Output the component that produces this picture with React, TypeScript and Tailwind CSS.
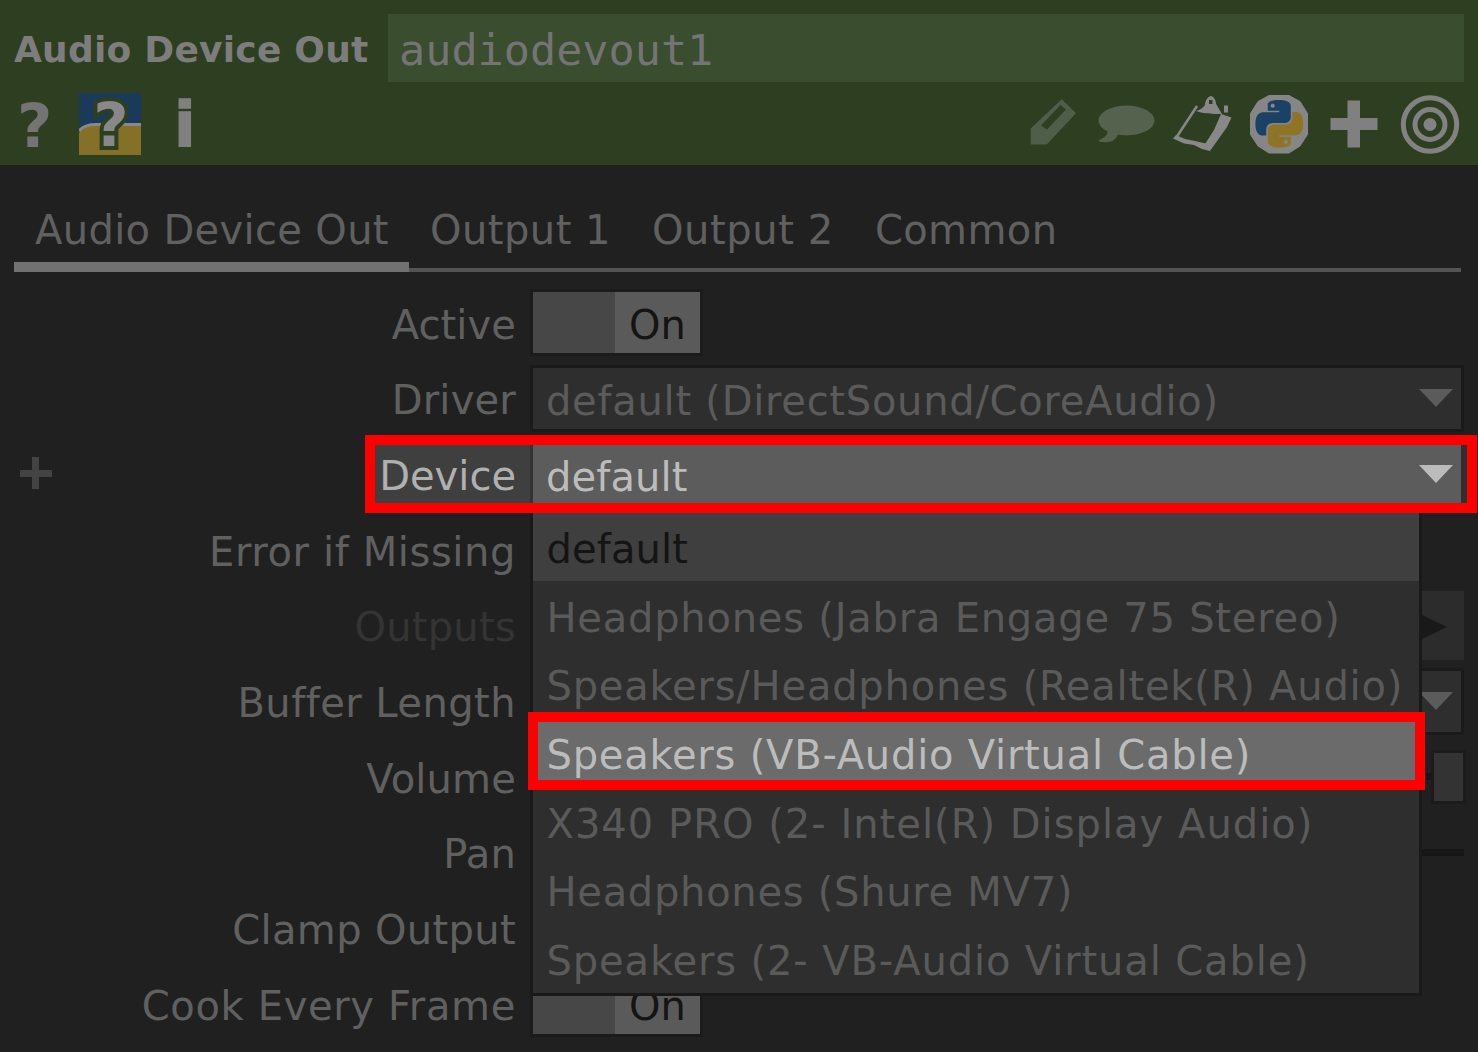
import type { ReactNode } from "react";

const PYTHON_HALF =
  "M14.25.18l.9.2.73.26.59.3.45.32.34.34.25.34.16.33.1.3.04.26.02.2-.01.13V8.5l-.05.63-.13.55-.21.46-.26.38-.3.31-.33.25-.35.19-.35.14-.33.1-.3.07-.26.04-.21.02H8.77l-.69.05-.59.14-.5.22-.41.27-.33.32-.27.35-.2.36-.15.37-.1.35-.07.32-.04.27-.02.21v3.06H3.17l-.21-.03-.28-.07-.32-.12-.35-.18-.36-.26-.36-.36-.35-.46-.32-.59-.28-.73-.21-.88-.14-1.05-.05-1.23.06-1.22.16-1.04.24-.87.32-.71.36-.57.4-.44.42-.33.42-.24.4-.16.36-.1.32-.05.24-.01h.16l.06.01h8.16v-.83H6.18l-.01-2.75-.02-.37.05-.34.11-.31.17-.28.25-.26.31-.23.38-.2.44-.18.51-.15.58-.12.64-.1.71-.06.77-.04.84-.02 1.27.05zm-6.3 1.98l-.23.33-.08.41.08.41.23.34.33.22.41.09.41-.09.33-.22.23-.34.08-.41-.08-.41-.23-.33-.33-.22-.41-.09-.41.09z";

function HeaderIcons() {
  return (
    <div className="flex items-center pt-[2px]">
      <svg className="mr-[21px] h-[60px] w-[47px]" viewBox="0 0 47 60" fill="#4f5e48">
        <path
          fillRule="evenodd"
          d="M.7 34.500 31.700 5.300 46 19.300 16.700 50.600H.7ZM11 31.500l6 4 19-20-5.500-4.500Z"
        />
      </svg>
      <svg className="mr-[17px] h-[60px] w-[58px]" viewBox="0 0 58 60" fill="#55634e">
        <ellipse cx="28.500" cy="26.500" rx="28" ry="15" />
        <path d="M9 35c2 6-2 8-9 12C8 50 18 48 20 40Z" />
      </svg>
      <svg className="mr-[17px] h-[60px] w-[59px]" viewBox="0 0 59 60" fill="#888888">
        <path d="M24 12 3 44" fill="none" stroke="#888888" strokeWidth="2.500" />
        <path d="M0 44.500 3 41l9 4 10 2 13 3 2 7-8-2-8-4-10-1.500Z" />
        <path d="M48 20 58.500 23.500 54 33l-17 24-5-7 9-14Z" />
        <path fillRule="evenodd" d="M23 17c4-1 7-3 9-6 0-4 2-8 6-9 3 1 5 4 5 8 2 3 3 5 6 10-9 0-18 0-26-3ZM36 6v4h3.500V6Z" />
        <path d="M51 11.500h4v7h-4z" />
      </svg>
      <svg className="mr-[21px] h-[60px] w-[60px]" viewBox="0 0 60 60">
        <path d="M20 1.500h20l11 6 7.500 12v21L51 52l-11 7H20L9 52 1.500 40.500v-21L9 7.500Z" fill="#868686" stroke="#868686" strokeWidth="1" strokeLinejoin="round" />
        <g transform="translate(6.500 6) scale(1.980)" fillRule="evenodd">
          <path d={PYTHON_HALF} fill="#1b4266" />
          <path d={PYTHON_HALF} fill="#8e7427" transform="rotate(180 12 12)" />
        </g>
      </svg>
      <svg className="mr-[22px] h-[60px] w-[48px]" viewBox="0 0 48 60" fill="#808080">
        <path d="M17.500 6.500h12.500V24H47.500v12H30v17.500H17.500V36H.5V24h17Z" />
      </svg>
      <svg className="h-[60px] w-[60px]" viewBox="0 0 60 60" fill="none" stroke="#828282">
        <circle cx="30" cy="30.500" r="26.700" strokeWidth="5" />
        <circle cx="30" cy="30.500" r="15" strokeWidth="5" />
        <circle cx="30" cy="30.500" r="6.500" fill="#828282" stroke="none" />
      </svg>
    </div>
  );
}

function Header() {
  return (
    <header className="flex h-[165px] flex-col bg-[#2d3f20] pt-[14px]">
      <div className="flex h-[68px] items-center pr-[14px]">
        <h1 className="w-[388px] pl-[14px] pt-[4px] text-[36px] leading-none font-bold tracking-[0.234px] text-[#7d7d7d]">
          Audio Device Out
        </h1>
        <div className="flex h-full flex-1 items-center bg-[#3a4d2e] pt-[5px] pl-[11px] font-['DejaVu_Sans_Mono',monospace] text-[43.500px] leading-none text-[#747474]">
          audiodevout1
        </div>
      </div>
      <div className="flex h-[84px] items-center justify-between pr-[18px]">
        <div className="flex items-center pt-[2px] text-[61px] leading-none font-bold">
          <span className="w-[79px] pt-[2px] pl-[17px] text-[#747474]">?</span>
          <span className="relative flex h-[62px] w-[62px] items-center justify-center">
            <svg className="absolute inset-0 size-full" viewBox="0 0 62 62">
              <path d="M0 0h62v33H0Z" fill="#1a3a5c" />
              <path d="M0 40C4 34 9 31 17 31h45v31H0Z" fill="#857028" />
              <path d="M0 38C4 33 9 31.500 17 31.500h45" fill="none" stroke="#888888" strokeWidth="3" />
            </svg>
            <span className="relative pt-[1px] pl-[2px] text-[#888888] [-webkit-text-stroke:8px_#2d3f20] [paint-order:stroke_fill]">
              ?
            </span>
          </span>
          <span className="pl-[33px] text-[63px] text-[#808080] [-webkit-text-stroke:1.500px_#808080]">i</span>
        </div>
        <HeaderIcons />
      </div>
    </header>
  );
}

function Tabs() {
  return (
    <nav className="ml-[14px] flex h-[107px] w-[1447px] flex-col justify-end text-[#606060]">
      <div className="flex gap-[41px] pb-[12px] pl-[21px] leading-[40px]">
        <span className="tracking-[0.340px]">Audio Device Out</span>
        <span className="tracking-[0.500px]">Output 1</span>
        <span className="tracking-[0.600px]">Output 2</span>
        <span className="tracking-[0.400px]">Common</span>
      </div>
      <div className="flex items-end">
        <div className="h-[10px] w-[395px] bg-[#717171]" />
        <div className="h-[4px] flex-1 bg-[#545454]" />
      </div>
    </nav>
  );
}

function Row({ label, tracking, color = "text-[#606060]", children }: { label: string; tracking: string; color?: string; children?: ReactNode }) {
  return (
    <div className="flex h-[75.670px] items-center">
      <div className={`w-[530px] shrink-0 pr-[14px] text-right leading-none ${tracking} ${color}`}>{label}</div>
      <div className="-mt-[4px] flex flex-1 items-center">{children}</div>
    </div>
  );
}

function Toggle() {
  return (
    <div className="flex h-[67px] w-[173px] border-[3px] border-[#1b1b1b]">
      <div className="w-[82px] bg-[#474747]" />
      <div className="flex flex-1 items-center bg-[#5a5a5a] pt-[4px] pl-[14px] leading-none text-[#141414]">On</div>
    </div>
  );
}

function Caret({ color }: { color: string }) {
  return (
    <svg className={`h-[18px] w-[34px] ${color}`} viewBox="0 0 34 18" fill="currentColor">
      <path d="M0 0h34L17 18Z" />
    </svg>
  );
}

function Select({ value, tracking = "" }: { value?: string; tracking?: string }) {
  return (
    <div className="flex h-[67px] w-[934px] items-center justify-between border-[3px] border-[#1a1a1a] bg-[#2e2e2e] pr-[8px] pl-[13px] leading-none text-[#5b5b5b]">
      <span className={`pt-[5px] ${tracking}`}>{value}</span>
      <Caret color="text-[#5b5b5b]" />
    </div>
  );
}

const options = [
  { text: "default", style: "bg-[#3f3f3f] text-[#141414] tracking-[0.100px]" },
  { text: "Headphones (Jabra Engage 75 Stereo)", style: "text-[#5a5a5a] tracking-[0.770px]" },
  { text: "Speakers/Headphones (Realtek(R) Audio)", style: "text-[#5a5a5a] tracking-[0.790px]" },
  { text: "Speakers (VB-Audio Virtual Cable)", style: "bg-[#6b6b6b] text-[#bcbcbc] tracking-[0.770px]" },
  { text: "X340 PRO (2- Intel(R) Display Audio)", style: "text-[#5a5a5a] tracking-[1.010px]" },
  { text: "Headphones (Shure MV7)", style: "text-[#5a5a5a] tracking-[0.720px]" },
  { text: "Speakers (2- VB-Audio Virtual Cable)", style: "text-[#5a5a5a] tracking-[0.870px]" },
];

function DeviceMenu() {
  return (
    <div className="absolute top-[512px] left-[530px] w-[892px] border-x-[3px] border-b-[3px] border-[#191919] bg-[#2e2e2e]">
      {options.map((o) => (
        <div key={o.text} className={`flex h-[68.700px] items-center pt-[5px] pl-[13.500px] leading-none whitespace-nowrap ${o.style}`}>
          {o.text}
        </div>
      ))}
    </div>
  );
}

export default function App() {
  return (
    <div className="relative h-[1052px] w-[1478px] overflow-hidden bg-[#202020] font-['DejaVu_Sans',Verdana,sans-serif] text-[40px]">
      <Header />
      <Tabs />
      <main className="mt-[15px]">
        <Row label="Active" tracking="tracking-[0.100px]">
          <Toggle />
        </Row>
        <Row label="Driver" tracking="tracking-[0.200px]">
          <Select value="default (DirectSound/CoreAudio)" tracking="tracking-[0.730px]" />
        </Row>
        <div className="relative flex h-[75.670px] items-center">
          <svg className="absolute top-[19px] left-[20px] h-[32px] w-[32px]" viewBox="0 0 32 32" fill="#434343">
            <path d="M12 0h7v32h-7zM0 13h32v7H0z" />
          </svg>
          <div className="ml-[370px] flex h-[62px] w-[160px] items-center justify-end bg-[#3f3f3f] pr-[14px] leading-none text-[#b0b0b0]">
            Device
          </div>
          <div className="flex h-[62px] w-[931px] items-center justify-between border-l-[3px] border-[#333333] bg-[#5c5c5c] pr-[8px] pl-[13px] leading-none text-[#bcbcbc]">
            <span className="pt-[1px] tracking-[0.100px]">default</span>
            <span className="-mt-[5px] flex">
              <Caret color="text-[#bcbcbc]" />
            </span>
          </div>
          <div className="h-[62px] w-[6px] bg-[#2f2f2f]" />
        </div>
        <Row label="Error if Missing" tracking="tracking-[0.600px]" />
        <Row label="Outputs" tracking="tracking-[0.250px]" color="text-[#343434]">
          <div className="ml-[892px] flex h-[69px] w-[42px] items-center bg-[#2c2c2c] pt-[3px]">
            <svg className="h-[24px] w-[26px]" viewBox="0 0 26 24" fill="#191919">
              <path d="M0 0v24L25 12Z" />
            </svg>
          </div>
        </Row>
        <Row label="Buffer Length" tracking="tracking-[0.450px]">
          <Select />
        </Row>
        <Row label="Volume" tracking="tracking-[0.168px]">
          <div className="h-[7px] w-[901px] bg-[#171717]" />
          <div className="h-[54px] w-[35px] border-[3px] border-[#1b1b1b] bg-[#333333]" />
        </Row>
        <Row label="Pan" tracking="tracking-[0.200px]">
          <div className="h-[7px] w-[934px] bg-[#171717]" />
        </Row>
        <Row label="Clamp Output" tracking="tracking-[0.350px]" />
        <Row label="Cook Every Frame" tracking="tracking-[0.660px]">
          <Toggle />
        </Row>
      </main>
      <DeviceMenu />
      <div className="absolute top-[435px] left-[365px] h-[78px] w-[1112px] border-[10px] border-[#ff0000]" />
      <div className="absolute top-[712px] left-[528px] h-[78px] w-[897px] border-[10px] border-[#ff0000]" />
    </div>
  );
}
